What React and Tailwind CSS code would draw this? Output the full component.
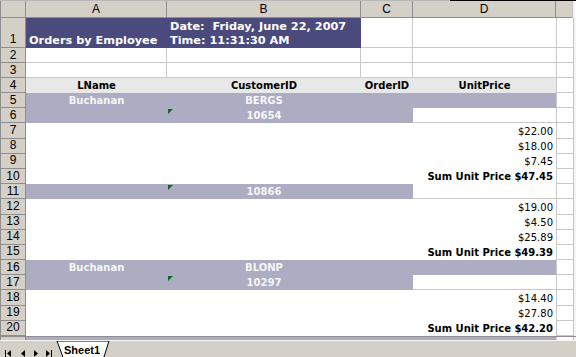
import React from 'react';

// column widths for A..D, then the half-visible E column
const colW = ['w-[141px]', 'w-[194px]', 'w-[52px]', 'w-[143px]'];

const fills = {
  title: 'bg-[#4a4a7c] text-white font-bold text-[11.3px] leading-[14px]',
  grid: 'bg-white border-r border-b border-[#c8c8c8]',
  gridD: 'bg-white border-b border-[#c8c8c8]',
  white: 'bg-white text-black text-[10px] leading-[12px] pb-[1px]',
  hdr: 'bg-[#e8e8e8] text-black font-bold text-[10px] leading-[12px] pb-[1px]',
  band: 'bg-[#acacc2] text-[#f6f6f6] font-bold text-[10px] leading-[12px] pb-[1px]',
};

const aligns = {
  left: 'justify-start pl-[3px]',
  center: 'justify-center',
  right: 'justify-end pr-[3px]',
};

const g = { t: 'grid' };
const w = { t: 'white' };
const b = { t: 'band' };
const price = (text, bold) => ({ t: 'white', text, align: 'right', bold });

const rows = [
  {
    n: 1,
    h: 'h-[30px]',
    cells: [
      { t: 'title', text: 'Orders by Employee', align: 'left' },
      { t: 'title', text: 'Date:  Friday, June 22, 2007\nTime: 11:31:30 AM', align: 'left' },
      g,
      g,
    ],
  },
  { n: 2, h: 'h-[15px]', cells: [g, g, g, g] },
  { n: 3, h: 'h-[15px]', cells: [g, g, g, g] },
  {
    n: 4,
    h: 'h-[15px]',
    cells: [
      { t: 'hdr', text: 'LName', align: 'center' },
      { t: 'hdr', text: 'CustomerID', align: 'center' },
      { t: 'hdr', text: 'OrderID', align: 'center' },
      { t: 'hdr', text: 'UnitPrice', align: 'center' },
    ],
  },
  { n: 5, cells: [{ t: 'band', text: 'Buchanan', align: 'center' }, { t: 'band', text: 'BERGS', align: 'center' }, b, b] },
  { n: 6, cells: [b, { t: 'band', text: '10654', align: 'center', tri: true }, b, g] },
  { n: 7, cells: [w, w, w, price('$22.00')] },
  { n: 8, cells: [w, w, w, price('$18.00')] },
  { n: 9, cells: [w, w, w, price('$7.45')] },
  { n: 10, cells: [w, w, w, price('Sum Unit Price $47.45', true)] },
  { n: 11, cells: [b, { t: 'band', text: '10866', align: 'center', tri: true }, b, g] },
  { n: 12, cells: [w, w, w, price('$19.00')] },
  { n: 13, cells: [w, w, w, price('$4.50')] },
  { n: 14, cells: [w, w, w, price('$25.89')] },
  { n: 15, cells: [w, w, w, price('Sum Unit Price $49.39', true)] },
  { n: 16, cells: [{ t: 'band', text: 'Buchanan', align: 'center' }, { t: 'band', text: 'BLONP', align: 'center' }, b, b] },
  { n: 17, cells: [b, { t: 'band', text: '10297', align: 'center', tri: true }, b, g] },
  { n: 18, cells: [w, w, w, price('$14.40')] },
  { n: 19, cells: [w, w, w, price('$27.80')] },
  { n: 20, cells: [w, w, w, price('Sum Unit Price $42.20', true)] },
];

const Cell = ({ c, i }) => {
  let fill = fills[c.t];
  if (c.t === 'grid' && i === 3) fill = fills.gridD;
  return (
    <div className={`relative flex items-end shrink-0 h-full overflow-hidden whitespace-pre ${colW[i]} ${fill} ${aligns[c.align || 'center']} ${c.bold ? 'font-bold' : ''}`}>
      {c.tri && (
        <svg className="absolute left-[1px] top-[1px]" width="5" height="5" viewBox="0 0 5 5">
          <polygon points="0,0 5,0 0,5" fill="#0f6a1f" />
        </svg>
      )}
      {c.text && <span>{c.text}</span>}
    </div>
  );
};

const RowLabel = ({ n, tall }) => (
  <div className={`flex justify-center shrink-0 w-[26px] h-full bg-[#d4d0c8] border-l border-r border-b border-[#8e8e8e] font-['Liberation_Sans',sans-serif] text-[12px] leading-[13px] text-black ${tall ? 'items-end pb-[1px]' : 'items-center'}`}>
    {n}
  </div>
);

const ColE = () => <div className="shrink-0 w-[17px] h-full bg-white border-l border-b border-[#c8c8c8]" />;
const Edge = () => <div className="shrink-0 w-[3px] h-full bg-[#f4f4f4] border-l border-[#c4c4c4]" />;

const NavArrows = () => (
  <svg className="absolute left-[3px] top-[8px]" width="52" height="9" viewBox="0 0 52 9">
    <rect x="2" y="1" width="1" height="7" fill="#000" />
    <polygon points="8,1 8,8 4,4.5" fill="#000" />
    <polygon points="22,1 22,8 18,4.5" fill="#000" />
    <polygon points="31,1 31,8 35,4.5" fill="#000" />
    <polygon points="43,1 43,8 47,4.5" fill="#000" />
    <rect x="48" y="1" width="1" height="7" fill="#000" />
  </svg>
);

export default function App() {
  return (
    <div className="w-[576px] h-[357px] overflow-hidden bg-white flex flex-col font-['DejaVu_Sans',sans-serif]">
      {/* top edge */}
      <div className="flex h-[1px] shrink-0">
        <div className="w-[450px] bg-[#b8b8b8]" />
        <div className="flex-1 bg-black" />
      </div>

      {/* column letters */}
      <div className="flex h-[17px] shrink-0 font-['Liberation_Sans',sans-serif] text-[12px] text-black">
        <div className="shrink-0 w-[26px] bg-[#d4d0c8] border-l border-r border-b border-[#8e8e8e]" />
        {['A', 'B', 'C', 'D'].map((l, i) => (
          <div key={l} className={`flex items-center justify-center shrink-0 ${colW[i]} bg-[#d4d0c8] border-r border-b border-[#8e8e8e]`}>
            {l}
          </div>
        ))}
        <div className="shrink-0 w-[16px] bg-[#d4d0c8] border-b border-[#8e8e8e]" />
        <Edge />
      </div>

      {rows.map((r) => (
        <div key={r.n} className={`flex shrink-0 ${r.h || 'h-[15.2px]'}`}>
          <RowLabel n={r.n} tall={r.n === 1} />
          {r.cells.map((c, i) => (
            <Cell key={i} c={c} i={i} />
          ))}
          <ColE />
          <Edge />
        </div>
      ))}

      {/* row 21, only its top shows */}
      <div className="flex flex-1 min-h-0 overflow-hidden border-t border-[#8e8e8e]">
        <div className="shrink-0 w-[26px] bg-[#d4d0c8] border-l border-r border-[#8e8e8e]" />
        <div className="shrink-0 w-[530px] bg-[#acacc2]" />
        <div className="shrink-0 w-[17px] bg-white border-l border-[#c8c8c8]" />
        <Edge />
      </div>

      {/* sheet tabs */}
      <div className="relative h-[17px] shrink-0 overflow-hidden bg-[#d4d0c8] border-t border-[#f4f4f4]">
        <NavArrows />
        <svg className="absolute left-[56px] top-0" width="56" height="20" viewBox="0 0 56 20">
          <polygon points="1,0 8,19 47,19 53,0" fill="#ffffff" stroke="#000" strokeWidth="1" />
        </svg>
        <span className="absolute left-[64px] top-[3px] font-['Liberation_Sans',sans-serif] font-bold text-[11px] leading-[12px] text-black">
          Sheet1
        </span>
      </div>
    </div>
  );
}
